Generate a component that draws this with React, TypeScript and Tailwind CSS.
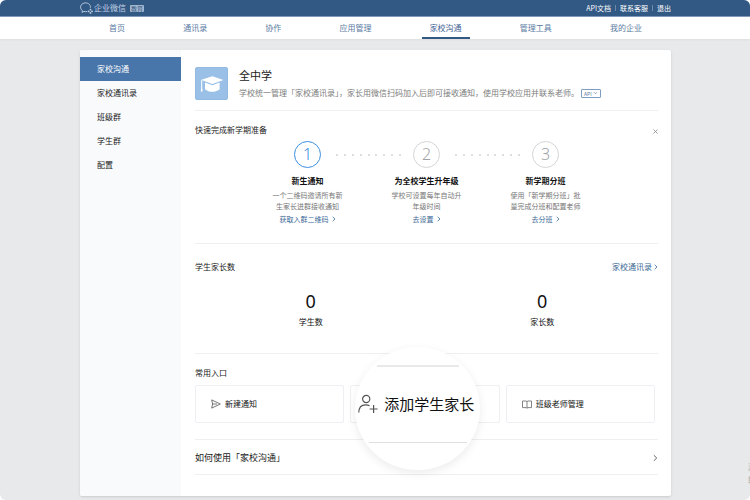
import React from 'react';

const topLinks = ['API文档', '联系客服', '退出'];

const navItems = ['首页', '通讯录', '协作', '应用管理', '家校沟通', '管理工具', '我的企业'];

const sideItems = ['家校沟通', '家校通讯录', '班级群', '学生群', '配置'];

const steps = [
  { title: '新生通知', lines: ['一个二维码邀请所有新', '生家长进群接收通知'], link: '获取入群二维码' },
  { title: '为全校学生升年级', lines: ['学校可设置每年自动升', '年级时间'], link: '去设置' },
  { title: '新学期分班', lines: ['使用「新学期分班」批', '量完成分班和配置老师'], link: '去分班' },
];

const stats = [
  { label: '学生数', value: 0 },
  { label: '家长数', value: 0 },
];

const Chevron: React.FC<{ className?: string }> = ({ className = '' }) => (
  <svg viewBox="0 0 4 6" className={`shrink-0 ${className}`} fill="none" stroke="currentColor" strokeWidth="0.8">
    <path d="M0.7 0.8 3 3 0.7 5.2" />
  </svg>
);

const Header: React.FC = () => (
  <header className="h-[17px] bg-[#325884] border-b border-[#7f9abb] pl-20 pr-[79px] flex items-center justify-between text-white">
    <div className="flex items-center text-[#c3d2e4]">
      <svg viewBox="0 0 13 12" className="w-[13px] h-3" fill="none" stroke="currentColor" strokeWidth="0.9">
        <path d="M7.4 9.4C6.2 9.8 5 9.8 3.9 9.4L2 10.4 2.3 8.6C-0.2 6.6 0.1 3 2.8 1.6 5.8 0 9.8 1.3 10.4 4.4c0.1 0.5 0.1 0.9 0 1.4" />
        <g fill="currentColor" stroke="none">
          <circle cx="10.5" cy="7.6" r="0.9" />
          <circle cx="8.8" cy="9.3" r="0.9" />
          <circle cx="12" cy="9.3" r="0.9" />
          <circle cx="10.5" cy="10.9" r="0.9" />
        </g>
      </svg>
      <span className="ml-px text-[8px] leading-3">企业微信</span>
      <span className="ml-1 px-px h-[7px] rounded-[1px] bg-[#a3b7d0] text-[#325884] text-[6px] leading-[7px]">教育</span>
    </div>
    <div className="flex items-center text-[7px] leading-3">
      {topLinks.map((item, index) => (
        <React.Fragment key={item}>
          {index > 0 && <span className="w-px h-[6px] mx-1 bg-[#7089aa]"></span>}
          <a href="#">{item}</a>
        </React.Fragment>
      ))}
    </div>
  </header>
);

const Nav: React.FC = () => (
  <nav className="h-[22px] bg-white pl-[101px] pr-[100px] flex justify-between text-[8px] leading-[22px] text-[#5b7ba3] shadow-xs">
    {navItems.map((item) => (
      <a
        key={item}
        href="#"
        className={`px-2 border-b-2 ${
          item === '家校沟通' ? 'border-[#325884] text-[#3f6596]' : 'border-transparent'
        }`}
      >
        {item}
      </a>
    ))}
  </nav>
);

const Sidebar: React.FC = () => (
  <aside className="w-[101px] shrink-0 bg-[#f8fafc] pt-[7px] text-[8px] leading-6 rounded-l-xs">
    {sideItems.map((item, index) => (
      <a
        key={item}
        href="#"
        className={`block pl-[17px] ${index === 0 ? 'bg-[#4876ab] text-white' : 'text-[#222]'}`}
      >
        {item}
      </a>
    ))}
  </aside>
);

const SchoolInfo: React.FC = () => (
  <section className="pb-[10px] border-b border-[#eeeff0] flex">
    <div className="w-[33px] h-[33px] shrink-0 rounded-xs bg-[#9ac0e8] border border-[#92b9e2] flex items-center justify-center">
      <svg viewBox="0 0 24 18" className="w-6 h-[18px]" fill="#fff">
        <path d="M12.4 1.2 23.4 4.9 12.4 8.9 2.6 5.6 0.8 4.9Z" />
        <path d="M5 7.6 12.4 10.2 19.6 7.6V14.4L17.6 15.6C15 17.2 9.8 17.2 7.4 15.8L5 14.2Z" />
        <path d="M1.2 5.2h1v7.4l0.4 4h-1.8l0.4-4Z" />
      </svg>
    </div>
    <div className="ml-[11px]">
      <h1 className="text-[11px] leading-4 text-[#222]">全中学</h1>
      <div className="mt-[4px] flex items-center">
        <p className="text-[8px] leading-3 text-[#7d7d7d] whitespace-nowrap">
          学校统一管理「家校通讯录」，家长用微信扫码加入后即可接收通知，使用学校应用并联系老师。
        </p>
        <button className="ml-[2px] h-[9px] px-[2px] border border-[#7f9dc3] rounded-[1px] flex items-center gap-px text-[5px] leading-[7px] text-[#5b7ba3]">
          API
          <svg viewBox="0 0 5 4" className="w-[5px] h-1" fill="none" stroke="currentColor" strokeWidth="0.7">
            <path d="M1 1.2 2.5 2.7 4 1.2" />
          </svg>
        </button>
      </div>
    </div>
  </section>
);

const Dots: React.FC = () => (
  <div className="w-[92px] pl-[15px] pr-[12px] flex items-center justify-between">
    {Array.from({ length: 9 }, (_, i) => (
      <span key={i} className="w-[2px] h-[2px] bg-[#dcdee0]"></span>
    ))}
  </div>
);

const Steps: React.FC = () => (
  <section className="pt-[13px] pb-[18px] border-b border-[#eeeff0]">
    <div className="flex justify-between">
      <h2 className="text-[8px] leading-3 text-[#222]">快速完成新学期准备</h2>
      <button aria-label="关闭" className="h-3 pt-[2px] text-[#888]">
        <svg viewBox="0 0 5 5" className="w-[5px] h-[5px]" stroke="currentColor" strokeWidth="0.8">
          <path d="M0.5 0.5 4.5 4.5M4.5 0.5 0.5 4.5" />
        </svg>
      </button>
    </div>
    <div className="mt-[5px] flex justify-center">
      {steps.map((step, index) => (
        <React.Fragment key={step.title}>
          {index > 0 && <Dots />}
          <span
            className={`w-[27px] h-[27px] rounded-full border font-['Noto_Sans'] font-light text-[16px] leading-[25px] text-center ${
              index === 0 ? 'border-[#3d8fe0] text-[#3d8fe0]' : 'border-[#d3d5d6] text-[#a0a3a6]'
            }`}
          >
            {index + 1}
          </span>
        </React.Fragment>
      ))}
    </div>
    <div className="mt-[7px] flex justify-center text-center">
      {steps.map((step) => (
        <div key={step.title} className="w-[119px]">
          <h3 className="text-[8px] leading-3 font-bold text-[#111]">{step.title}</h3>
          <p className="mt-[3px] text-[7px] leading-[11px] text-[#777]">
            {step.lines[0]}
            <br />
            {step.lines[1]}
          </p>
          <a href="#" className="mt-px flex items-center justify-center gap-[3px] text-[7px] leading-3 text-[#3b6895]">
            {step.link}
            <Chevron className="w-[4px] h-[6px]" />
          </a>
        </div>
      ))}
    </div>
  </section>
);

const Stats: React.FC = () => (
  <section className="pt-[17px] pb-[25px] border-b border-[#eeeff0]">
    <div className="flex justify-between text-[8px] leading-3">
      <h2 className="text-[#222]">学生家长数</h2>
      <a href="#" className="flex items-center gap-[2px] text-[#3b6895]">
        家校通讯录
        <Chevron className="w-[4px] h-[6px]" />
      </a>
    </div>
    <div className="mt-[18px] grid grid-cols-2 text-center text-[#111]">
      {stats.map((stat) => (
        <div key={stat.label}>
          <div className="font-['Noto_Sans'] text-[18px] leading-5">{stat.value}</div>
          <div className="mt-[5px] text-[8px] leading-3">{stat.label}</div>
        </div>
      ))}
    </div>
  </section>
);

const Shortcuts: React.FC = () => (
  <section className="pt-[13px] pb-4 border-b border-[#eeeff0]">
    <h2 className="text-[8px] leading-3 text-[#222]">常用入口</h2>
    <div className="mt-[6px] pr-[3px] grid grid-cols-3 gap-[6px] text-[8px] text-[#111]">
      <button className="h-[38px] pl-[15px] border border-[#eeeff2] rounded-xs flex items-center gap-1">
        <svg viewBox="0 0 10 10" className="w-[10px] h-[10px]" fill="none" stroke="#555" strokeWidth="0.8">
          <path d="M0.7 0.9 9.3 5 0.7 9.1 1.6 5ZM1.6 5H6" />
        </svg>
        新建通知
      </button>
      <div className="relative h-[38px] border border-[#eeeff2] rounded-xs">
        {/* enlarged entry laid over the middle card */}
        <button className="absolute left-[4px] -top-[39px] w-[125px] h-[123px] rounded-full bg-white shadow-[0_3px_10px_rgba(0,0,0,0.08)] overflow-hidden flex flex-col items-center pt-[18px]">
          <span className="w-[82px] h-[2px] bg-[#e9e9ea]"></span>
          <span className="w-full h-[75px] pl-[3px] pb-[2px] flex items-center gap-[6px] text-[15px] leading-5 whitespace-nowrap">
            <svg viewBox="0 0 20 20" className="w-5 h-5 shrink-0" fill="none" stroke="#555" strokeWidth="1.2">
              <circle cx="8.2" cy="5" r="3.6" />
              <path d="M0.8 18.6C0.8 13.6 3.6 10.8 7.6 10.8c1.5 0 2.8 0.3 3.9 1" />
              <path d="M15.6 11v8M11.6 15h8" />
            </svg>
            添加学生家长
          </span>
          <span className="w-[98px] h-px bg-[#dfdfe0]"></span>
        </button>
      </div>
      <button className="h-[38px] pl-[15px] border border-[#eeeff2] rounded-xs flex items-center gap-1">
        <svg viewBox="0 0 10 9" className="w-[10px] h-[9px]" fill="none" stroke="#666" strokeWidth="0.8">
          <path d="M0.5 1H4L5 1.6 6 1H9.5V7.6H6L5 8.2 4 7.6H0.5ZM5 1.6V8" />
        </svg>
        班级老师管理
      </button>
    </div>
  </section>
);

const App: React.FC = () => {
  return (
    <div className="bg-white">
      <div className="relative min-h-screen bg-[#e8e9eb] rounded-md overflow-hidden font-['Noto_Sans_CJK_SC',sans-serif]">
        <Header />
        <Nav />
        <div className="pt-[11px] pb-1 pl-20 pr-[79px]">
          <div className="flex bg-white rounded-xs shadow-sm">
            <Sidebar />
            <main className="flex-1 min-w-0 pt-[17px] pl-[14px] pr-[13px] pb-[21px]">
              <SchoolInfo />
              <Steps />
              <Stats />
              <Shortcuts />
              <button className="w-full h-[35px] pt-px border-b border-[#eeeff0] flex items-center justify-between text-[9px] text-[#222]">
                如何使用「家校沟通」
                <Chevron className="w-[5px] h-2 text-[#666]" />
              </button>
            </main>
          </div>
        </div>
        <div className="absolute right-0 bottom-[14px] w-[2px] overflow-hidden whitespace-nowrap text-[8px] leading-[13px] text-[#a5a6a8]">
          <div>激</div>
          <div>转</div>
        </div>
      </div>
    </div>
  );
};

export default App;
